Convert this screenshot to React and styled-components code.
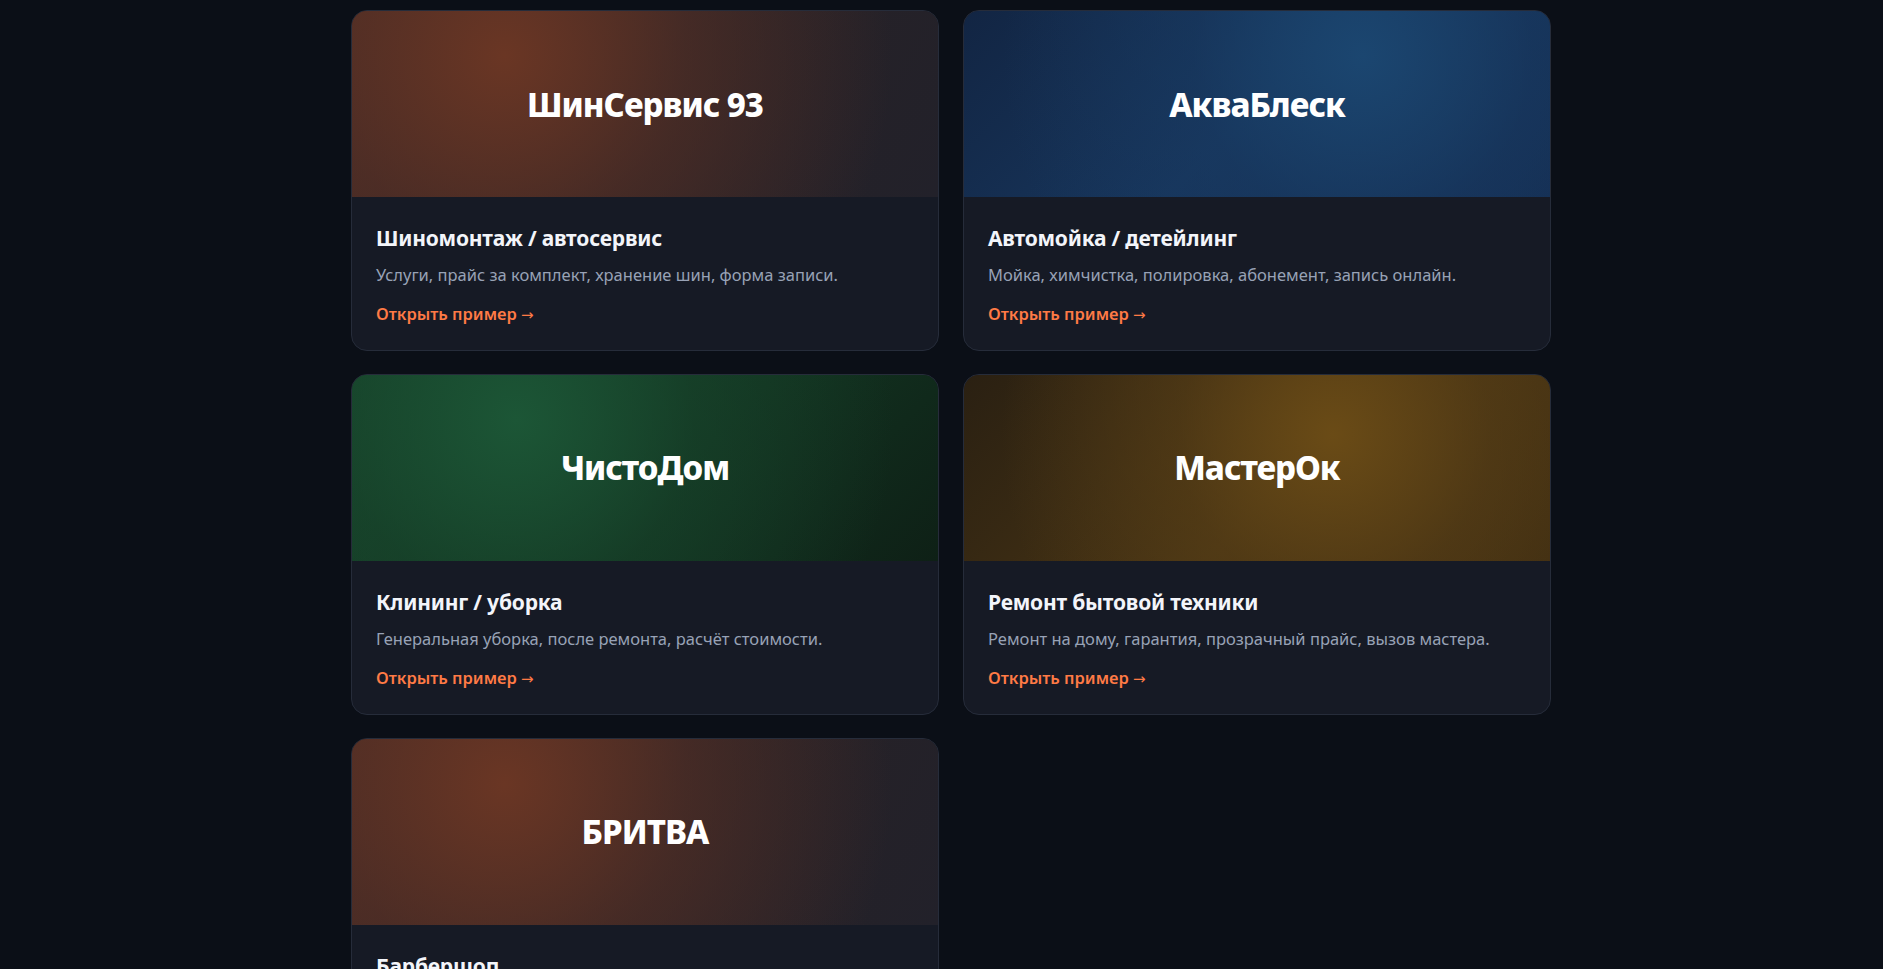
import styled, { createGlobalStyle } from "styled-components";

const GlobalStyle = createGlobalStyle`
  * { box-sizing: border-box; }
  body {
    margin: 0;
    background: #0b0f17;
    font-family: "Noto Sans", "Open Sans", sans-serif;
    color: #f1f3f8;
  }
`;

const Page = styled.div`
  padding: 10px 0 40px 19px;
`;

const Grid = styled.div`
  max-width: 1200px;
  margin: 0 auto;
  display: grid;
  grid-template-columns: 1fr 1fr;
  gap: 23px 24px;
`;

const Card = styled.a`
  display: flex;
  flex-direction: column;
  background: #161a25;
  border: 1px solid #262c3a;
  border-radius: 16px;
  overflow: hidden;
  text-decoration: none;
  color: inherit;
`;

const Banner = styled.div`
  height: 186px;
  display: flex;
  align-items: center;
  justify-content: center;
  background: ${(p) => p.$bg};
`;

const BrandName = styled.div`
  font-size: 33px;
  font-weight: 800;
  letter-spacing: -1px;
  color: #ffffff;
`;

const Body = styled.div`
  padding: 28px 24px 23px;
`;

const Title = styled.h3`
  margin: 0 0 11px;
  font-size: 21px;
  line-height: 1.3;
  font-weight: 700;
  letter-spacing: -0.2px;
  color: #f3f5fa;
`;

const Desc = styled.p`
  margin: 0 0 14px;
  font-size: 16.5px;
  line-height: 1.5;
  color: #98a2b6;
`;

const More = styled.span`
  display: block;
  font-size: 16.5px;
  line-height: 1.5;
  font-weight: 600;
  color: #ff7a45;
`;

const Arrow = styled.span`
  font-family: "DejaVu Sans", sans-serif;
  font-weight: 400;
  font-size: 15px;
`;

const themes = {
  rust:
    "radial-gradient(circle at 26% 24%, rgba(106, 54, 36, 1) 0%, rgba(88, 48, 37, 0.6) 40%, rgba(40, 32, 34, 0) 85%), linear-gradient(120deg, #462b25 0%, #31252526 50%, #22212a 100%), #262126",
  blue:
    "radial-gradient(circle at 68% 24%, rgba(27, 70, 112, 1) 0%, rgba(24, 58, 98, 0.55) 40%, rgba(18, 38, 70, 0) 85%), linear-gradient(135deg, #122543 0%, #17355b 50%, #142c50 100%)",
  green:
    "radial-gradient(circle at 28% 24%, rgba(28, 86, 54, 1) 0%, rgba(24, 70, 44, 0.55) 40%, rgba(16, 40, 26, 0) 85%), linear-gradient(135deg, #17452c 0%, #123220 55%, #0e2016 100%)",
  gold:
    "radial-gradient(circle at 63% 32%, rgba(106, 75, 22, 1) 0%, rgba(90, 64, 22, 0.55) 40%, rgba(50, 38, 18, 0) 85%), linear-gradient(135deg, #2a2012 0%, #463314 55%, #3d2c12 100%)",
};

const projects = [
  {
    brand: "ШинСервис 93",
    theme: "rust",
    title: "Шиномонтаж / автосервис",
    desc: "Услуги, прайс за комплект, хранение шин, форма записи.",
  },
  {
    brand: "АкваБлеск",
    theme: "blue",
    title: "Автомойка / детейлинг",
    desc: "Мойка, химчистка, полировка, абонемент, запись онлайн.",
  },
  {
    brand: "ЧистоДом",
    theme: "green",
    title: "Клининг / уборка",
    desc: "Генеральная уборка, после ремонта, расчёт стоимости.",
  },
  {
    brand: "МастерОк",
    theme: "gold",
    title: "Ремонт бытовой техники",
    desc: "Ремонт на дому, гарантия, прозрачный прайс, вызов мастера.",
  },
  {
    brand: "БРИТВА",
    theme: "rust",
    title: "Барбершоп",
    desc: "Мастера, услуги и цены, онлайн-запись на стрижку.",
  },
];

const App = () => {
  return (
    <Page>
      <GlobalStyle />
      <Grid>
        {projects.map((p) => (
          <Card key={p.brand} href="#">
            <Banner $bg={themes[p.theme]}>
              <BrandName>{p.brand}</BrandName>
            </Banner>
            <Body>
              <Title>{p.title}</Title>
              <Desc>{p.desc}</Desc>
              <More>
                Открыть пример <Arrow>→</Arrow>
              </More>
            </Body>
          </Card>
        ))}
      </Grid>
    </Page>
  );
};

export default App;
